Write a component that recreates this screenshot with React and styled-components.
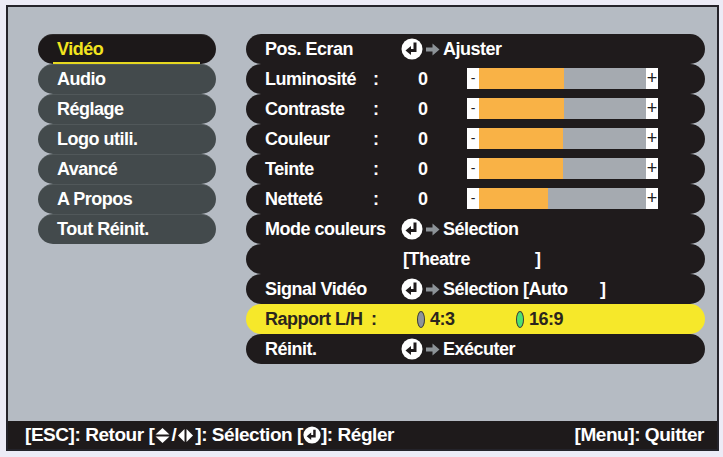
import React from "react";
import styled, { createGlobalStyle } from "styled-components";

const Global = createGlobalStyle`
  html, body { margin: 0; padding: 0; background: #ecebf6; }
  body { font-family: "Liberation Sans", Arial, sans-serif; }
`;

const Panel = styled.div`
  box-sizing: border-box;
  margin: 5px 0 0 6px;
  width: 713px;
  height: 446px;
  border: 2px solid #24232a;
  background: #b5bbc3;
  display: flex;
  flex-direction: column;
`;

const Content = styled.div`
  flex: 1;
  display: flex;
  gap: 30px;
  padding: 27px 0 0 30px;
`;

const Menu = styled.div`
  width: 178px;
  display: flex;
  flex-direction: column;
`;

const MenuItem = styled.div`
  position: relative;
  box-sizing: border-box;
  height: 30px;
  border-radius: 15px;
  background: ${(p) => (p.$active ? "#1c1819" : "#434a4c")};
  box-shadow: inset 0 1px 0 rgba(255, 255, 255, 0.08);
  color: ${(p) => (p.$active ? "#f2e41f" : "#ffffff")};
  font-size: 18px;
  font-weight: 700;
  display: flex;
  align-items: center;
  padding-left: 19px;
  letter-spacing: -0.5px;
`;

const Underline = styled.div`
  position: absolute;
  left: 15px;
  right: 16px;
  bottom: 0;
  height: 2px;
  background: #e6d820;
`;

const List = styled.div`
  width: 459px;
  display: flex;
  flex-direction: column;
`;

const Row = styled.div`
  box-sizing: border-box;
  height: 30px;
  border-radius: 15px;
  background: ${(p) => (p.$highlight ? "#f6e82a" : "#1f1b1c")};
  color: ${(p) => (p.$highlight ? "#2a251d" : "#ffffff")};
  font-size: 18px;
  font-weight: 700;
  display: flex;
  align-items: center;
  padding-left: 19px;
  white-space: nowrap;
  letter-spacing: -0.5px;
`;

const Cell = styled.div`
  width: ${(p) => p.$w}px;
  flex: none;
  display: flex;
  align-items: center;
`;

const Slider = styled.div`
  width: 191px;
  height: 21px;
  display: flex;
  background: #a5aab0;
  margin-top: -2px;
`;

const SlEnd = styled.div`
  width: 12px;
  flex: none;
  background: #ffffff;
  color: #222;
  font-weight: 400;
  font-size: ${(p) => (p.$plus ? "18px" : "14px")};
  display: flex;
  align-items: center;
  justify-content: center;
  line-height: 1;
  letter-spacing: 0;
`;

const SlTrack = styled.div`
  flex: 1;
  display: flex;
`;

const SlFill = styled.div`
  background: #f9b246;
  height: 100%;
`;

const Action = styled.div`
  display: flex;
  align-items: center;
`;

const ActionText = styled.span`
  margin-left: 2px;
`;

const Fixed = styled.span`
  display: inline-block;
  width: ${(p) => p.$w}px;
`;

const Oval = styled.span`
  display: inline-block;
  width: 6px;
  height: 15px;
  border-radius: 50%;
  background: ${(p) => p.$c};
  border: 1px solid #3a3a36;
  margin-right: 5px;
`;

const Footer = styled.div`
  height: 28px;
  background: #1e1a1b;
  color: #ffffff;
  font-size: 19px;
  font-weight: 700;
  display: flex;
  align-items: center;
  justify-content: space-between;
  padding: 0 13px 0 17px;
  white-space: nowrap;
  letter-spacing: -0.45px;
`;

const FooterGroup = styled.div`
  display: flex;
  align-items: center;
`;

const IconWrap = styled.span`
  display: inline-flex;
  align-items: center;
  margin: 0 ${(p) => p.$m || 0}px;
`;

const EnterIcon = ({ size = 22 }) => (
  <svg width={size} height={size} viewBox="0 0 22 22">
    <circle cx="11" cy="11" r="10.5" fill="#fff" />
    <path d="M14 4.5 V12.5 H9" stroke="#1f1b1c" strokeWidth="3" fill="none" />
    <path d="M4.5 12.5 L10 8 L10 17 Z" fill="#1f1b1c" />
  </svg>
);

const GrayArrow = () => (
  <svg width="18" height="13" viewBox="0 0 18 13">
    <path d="M3 4.5 H9.5 V0.5 L16.5 6.5 L9.5 12.5 V8.5 H3 Z" fill="#8d9398" />
  </svg>
);

const UpDown = () => (
  <svg width="15" height="17" viewBox="0 0 15 17">
    <path d="M0.5 7.5 L7.5 1 L14.5 7.5 Z" fill="#fff" />
    <path d="M0.5 9.5 L7.5 16 L14.5 9.5 Z" fill="#fff" />
  </svg>
);

const LeftRight = () => (
  <svg width="17" height="15" viewBox="0 0 17 15">
    <path d="M7.5 1 L1 7.5 L7.5 14 Z" fill="#fff" />
    <path d="M9.5 1 L16 7.5 L9.5 14 Z" fill="#fff" />
  </svg>
);

const sliders = [
  { label: "Luminosité", pct: 50.6 },
  { label: "Contraste", pct: 50.6 },
  { label: "Couleur", pct: 50 },
  { label: "Teinte", pct: 50 },
  { label: "Netteté", pct: 41.6 },
];

const menu = ["Vidéo", "Audio", "Réglage", "Logo utili.", "Avancé", "A Propos", "Tout Réinit."];

const ActionCell = ({ text }) => (
  <Action>
    <EnterIcon />
    <GrayArrow />
    <ActionText>{text}</ActionText>
  </Action>
);

export default function App() {
  return (
    <>
      <Global />
      <Panel>
        <Content>
          <Menu>
            {menu.map((m, i) => (
              <MenuItem key={m} $active={i === 0}>
                {m}
                {i === 0 && <Underline />}
              </MenuItem>
            ))}
          </Menu>
          <List>
            <Row>
              <Cell $w={136}>Pos. Ecran</Cell>
              <ActionCell text="Ajuster" />
            </Row>
            {sliders.map((s) => (
              <Row key={s.label}>
                <Cell $w={108}>{s.label}</Cell>
                <Cell $w={45}>:</Cell>
                <Cell $w={49}>0</Cell>
                <Slider>
                  <SlEnd>-</SlEnd>
                  <SlTrack>
                    <SlFill style={{ width: `${s.pct}%` }} />
                  </SlTrack>
                  <SlEnd $plus>+</SlEnd>
                </Slider>
              </Row>
            ))}
            <Row>
              <Cell $w={136}>Mode couleurs</Cell>
              <ActionCell text="Sélection" />
            </Row>
            <Row>
              <Cell $w={138} />
              <Fixed $w={132}>[Theatre</Fixed>]
            </Row>
            <Row>
              <Cell $w={136}>Signal Vidéo</Cell>
              <Action>
                <EnterIcon />
                <GrayArrow />
                <ActionText>
                  <Fixed $w={157}>Sélection [Auto</Fixed>]
                </ActionText>
              </Action>
            </Row>
            <Row $highlight>
              <Cell $w={106}>Rapport L/H</Cell>
              <Cell $w={46}>:</Cell>
              <Cell $w={99}>
                <Oval $c="#8e949a" />
                4:3
              </Cell>
              <Cell $w={80}>
                <Oval $c="#4ee070" />
                16:9
              </Cell>
            </Row>
            <Row>
              <Cell $w={136}>Réinit.</Cell>
              <ActionCell text="Exécuter" />
            </Row>
          </List>
        </Content>
        <Footer>
          <FooterGroup>
            [ESC]: Retour [
            <IconWrap $m={1}>
              <UpDown />
            </IconWrap>
            /
            <IconWrap $m={1}>
              <LeftRight />
            </IconWrap>
            ]: Sélection [
            <IconWrap>
              <EnterIcon size={18} />
            </IconWrap>
            ]: Régler
          </FooterGroup>
          <FooterGroup>[Menu]: Quitter</FooterGroup>
        </Footer>
      </Panel>
    </>
  );
}
